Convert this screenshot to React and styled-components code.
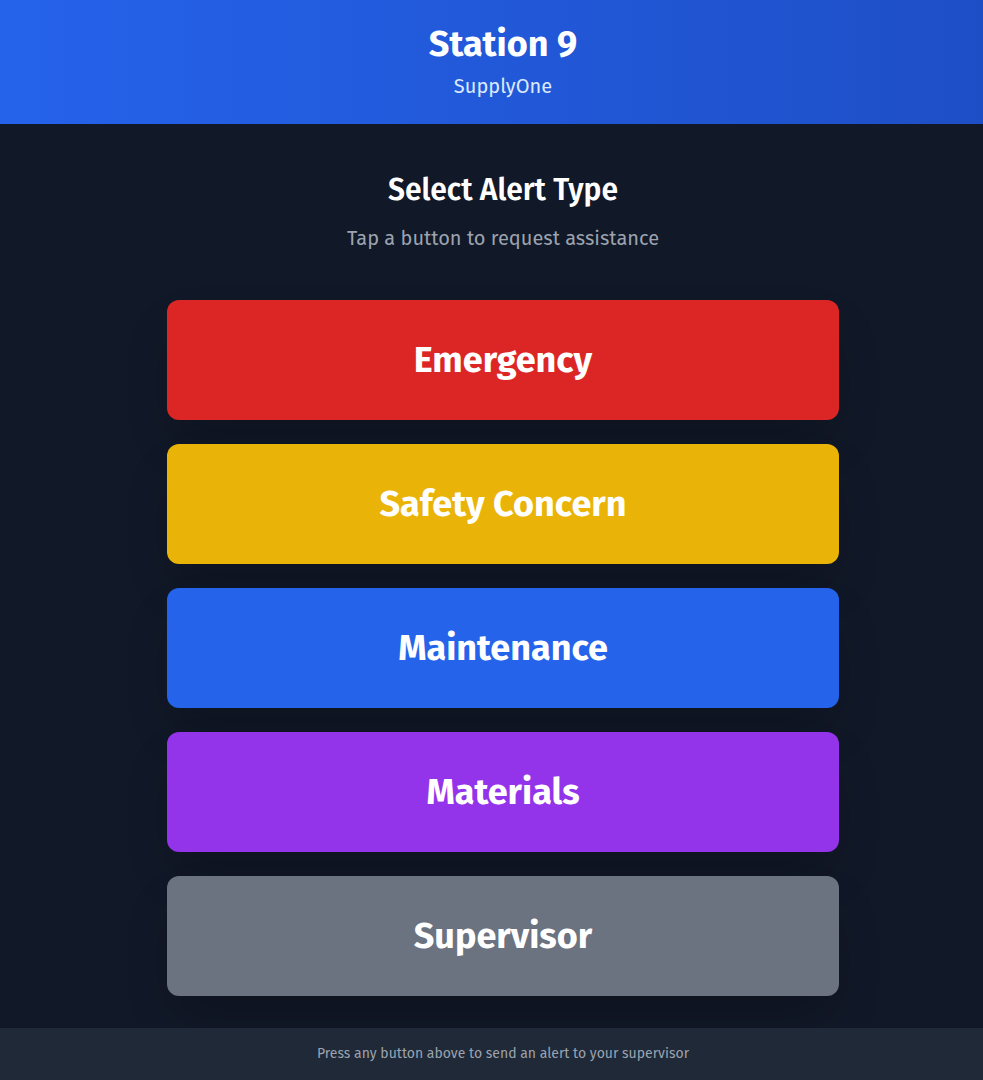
import React from "react";
import styled, { createGlobalStyle } from "styled-components";

const Global = createGlobalStyle`
  html, body { margin: 0; padding: 0; background: #111827; overflow: hidden; }
  body { font-family: "Fira Sans", "Open Sans", sans-serif; -webkit-font-smoothing: antialiased; }
  * { box-sizing: border-box; }
`;

const Page = styled.div`
  width: 1006px;
  min-height: 1080px;
  display: flex;
  flex-direction: column;
  background: #111827;
  color: #fff;
`;

const Header = styled.header`
  background: linear-gradient(to right, #2563eb, #1e4ec6);
  padding: 24px;
  text-align: center;
  display: flex;
  flex-direction: column;
  gap: 8px;
`;

const Title = styled.h1`
  margin: 0;
  font-size: 36px;
  line-height: 40px;
  font-weight: 700;
`;

const Sub = styled.p`
  margin: 0;
  font-size: 20px;
  line-height: 28px;
  color: #dbeafe;
`;

const Main = styled.main`
  flex: 1;
  padding: 48px 24px 32px;
  display: flex;
  flex-direction: column;
  align-items: center;
`;

const Heading = styled.h2`
  margin: 0 0 16px;
  font-size: 30px;
  line-height: 36px;
  font-weight: 600;
`;

const Hint = styled.p`
  margin: 0 0 48px;
  font-size: 20px;
  line-height: 28px;
  color: #9ca3af;
`;

const List = styled.div`
  width: 672px;
  display: flex;
  flex-direction: column;
  gap: 24px;
`;

const AlertButton = styled.button`
  height: 120px;
  border: none;
  border-radius: 12px;
  background: ${(p) => p.$bg};
  color: #fff;
  font-family: inherit;
  font-size: 36px;
  font-weight: 700;
  box-shadow: 0 25px 50px -12px rgba(0, 0, 0, 0.25);
  cursor: pointer;
`;

const Footer = styled.footer`
  background: #1f2937;
  padding: 16px;
  text-align: center;
  font-size: 14px;
  line-height: 20px;
  color: #9ca3af;
`;

const alerts = [
  { label: "Emergency", bg: "#dc2626" },
  { label: "Safety Concern", bg: "#eab308" },
  { label: "Maintenance", bg: "#2563eb" },
  { label: "Materials", bg: "#9333ea" },
  { label: "Supervisor", bg: "#6b7280" },
];

export default function App() {
  return (
    <Page>
      <Global />
      <Header>
        <Title>Station 9</Title>
        <Sub>SupplyOne</Sub>
      </Header>
      <Main>
        <Heading>Select Alert Type</Heading>
        <Hint>Tap a button to request assistance</Hint>
        <List>
          {alerts.map((a) => (
            <AlertButton key={a.label} $bg={a.bg}>{a.label}</AlertButton>
          ))}
        </List>
      </Main>
      <Footer>Press any button above to send an alert to your supervisor</Footer>
    </Page>
  );
}
